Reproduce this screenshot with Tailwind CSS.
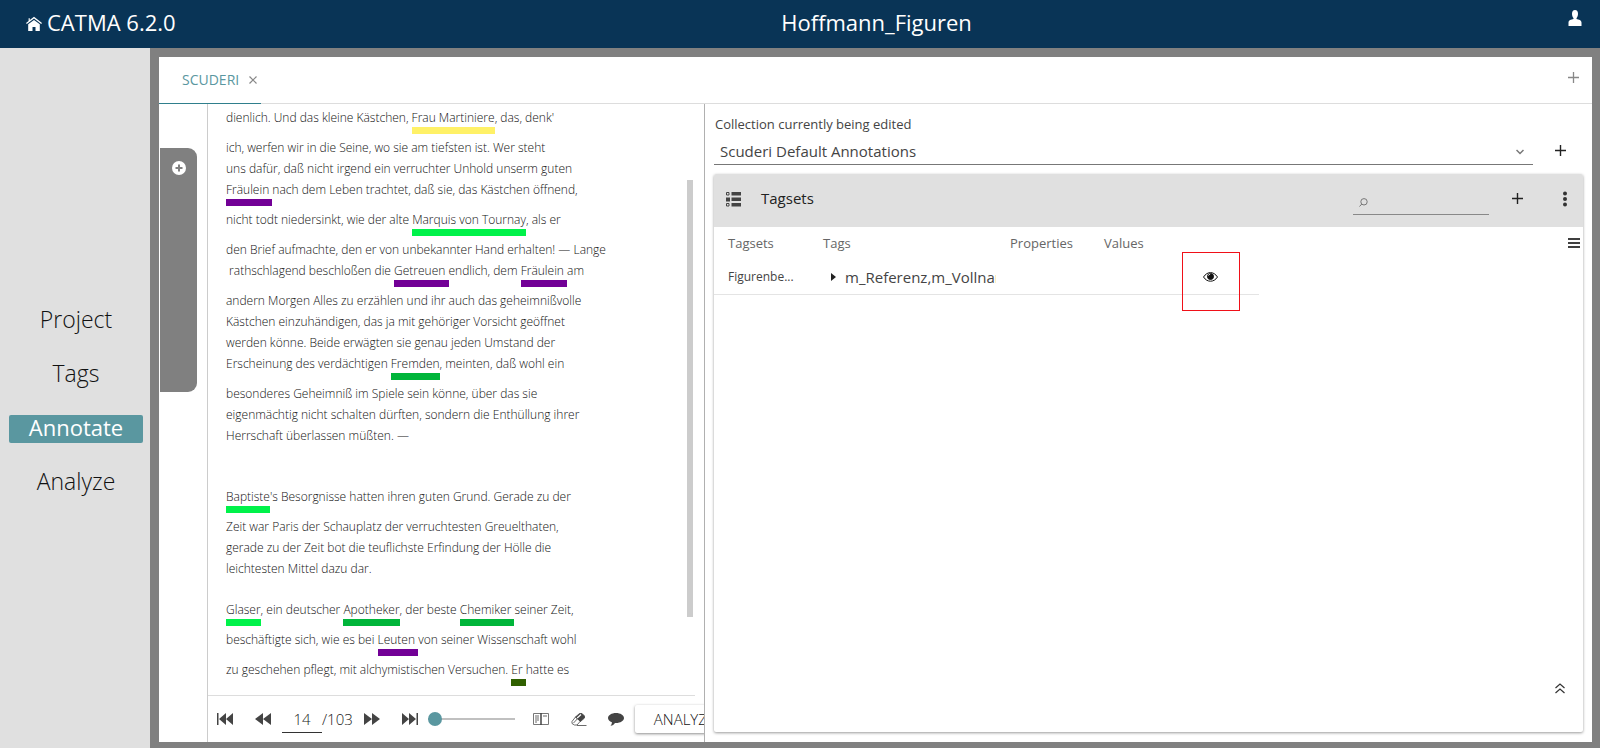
<!DOCTYPE html>
<html lang="en">
<head>
<meta charset="utf-8">
<meta name="viewport" content="width=device-width, initial-scale=1">
<title>CATMA 6.2.0</title>
<script src="https://cdn.jsdelivr.net/npm/@tailwindcss/browser@4"></script>
</head>
<body class="flex h-screen flex-col overflow-hidden bg-[#808080] font-['Open_Sans',sans-serif] text-[#444]">

<header class="flex h-12 shrink-0 items-center bg-[#093456] pb-1 text-[22px] leading-8 text-white">
  <a href="#" class="flex w-[186px] shrink-0 items-center gap-[5px] pl-[26px] whitespace-nowrap">
    <svg class="mt-1 size-4 shrink-0" viewBox="0 0 16 16" fill="currentColor" aria-hidden="true"><path d="M8 .8 3.8 4V2.2H2.6V5L0 7l.8 1L8 2.6 15.200 8l.8-1z"/><path d="M8 4 2.200 8.300V15H6.500v-4h3v4h4.300V8.300z"/></svg>
    <span>CATMA 6.2.0</span>
  </a>
  <h1 class="flex-1 text-center">Hoffmann_Figuren</h1>
  <button type="button" aria-label="Account" class="w-[33px] pb-2">
    <svg class="size-4" viewBox="0 0 16 16" fill="currentColor" aria-hidden="true"><path d="M8 0c2 0 3 1.500 3 3.800 0 1.900-.6 3.500-1.500 4.400v.9c2.400.4 5 1.300 5 3.400V16h-13v-3.500c0-2.100 2.600-3 5-3.400v-.9C5.600 7.300 5 5.700 5 3.800 5 1.500 6 0 8 0z"/></svg>
  </button>
</header>

<div class="flex min-h-0 flex-1">
  <nav class="flex w-[150px] shrink-0 flex-col justify-center gap-[26px] bg-[#e0e0e0] pt-2 pr-[7px] pl-[9px] text-center text-[23px] leading-6 font-light text-[#111]">
    <a href="#" class="pb-1">Project</a>
    <a href="#" class="pb-1">Tags</a>
    <a href="#" aria-current="page" class="rounded-xs bg-[#5a97a0] pb-1 text-[22px] leading-6 font-medium text-white">Annotate</a>
    <a href="#" class="pb-1">Analyze</a>
  </nav>

  <main class="mt-[9px] mr-2 mb-[6px] ml-[9px] flex min-w-0 flex-1 flex-col bg-white">
    <div class="flex h-[47px] shrink-0 justify-between border-b border-[#ddd]">
      <div class="-mb-px flex items-center gap-[10px] border-b border-[#2f7f8c] pr-1 pl-[23px]">
        <a href="#" class="text-sm text-[#5a97a0]">SCUDERI</a>
        <button type="button" aria-label="Close tab" class="text-[#888]"><svg class="size-2" viewBox="0 0 8 8" fill="none" stroke="currentColor" stroke-width="1.200" aria-hidden="true"><path d="M.5.5l7 7M7.500.5l-7 7"/></svg></button>
      </div>
      <button type="button" aria-label="Open tab" class="px-[13px] pb-[6px] text-[#888]"><svg class="size-[11px]" viewBox="0 0 11 11" fill="none" stroke="currentColor" stroke-width="1.300" aria-hidden="true"><path d="M5.500 0v11M0 5.500h11"/></svg></button>
    </div>

    <div class="flex min-h-0 flex-1">
      <section class="flex w-[546px] shrink-0 overflow-hidden border-r border-[#b0b0b0]">
        <div class="w-12 shrink-0 pt-11 pl-px">
          <div class="flex h-[244px] w-[37px] flex-col items-center rounded-r-[9px] bg-[#808080] pt-[13px]">
            <button type="button" aria-label="Expand drawer"><svg class="size-[14px]" viewBox="0 0 14 14" aria-hidden="true"><circle cx="7" cy="7" r="7" fill="#fff"/><path d="M7 3.500v7M3.500 7h7" stroke="#808080" stroke-width="2"/></svg></button>
          </div>
        </div>

        <div class="flex min-w-0 flex-1 flex-col border-l border-[#ccc]">
          <div class="mr-[9px] flex min-h-0 flex-1 justify-between overflow-hidden border-b border-[#ddd]">
            <article lang="de" class="pt-[3px] pl-[18px] text-xs leading-[21px] font-light text-[#111] [&_p]:whitespace-pre">
              <p class="h-[30px]">dienlich. Und das kleine Kästchen, <span class="border-b-7 border-[#fff167] pb-px">Frau Martiniere</span>, das, denk'</p>
              <p>ich, werfen wir in die Seine, wo sie am tiefsten ist. Wer steht</p>
              <p>uns dafür, daß nicht irgend ein verruchter Unhold unserm guten</p>
              <p class="h-[30px]"><span class="border-b-7 border-[#720096] pb-px">Fräulein </span>nach dem Leben trachtet, daß sie, das Kästchen öffnend,</p>
              <p class="h-[30px]">nicht todt niedersinkt, wie der alte <span class="border-b-7 border-[#00f24a] pb-px">Marquis von Tournay</span>, als er</p>
              <p>den Brief aufmachte, den er von unbekannter Hand erhalten! — Lange</p>
              <p class="h-[30px]"> rathschlagend beschloßen die <span class="border-b-7 border-[#720096] pb-px">Getreuen </span>endlich, dem <span class="border-b-7 border-[#720096] pb-px">Fräulein </span>am</p>
              <p>andern Morgen Alles zu erzählen und ihr auch das geheimnißvolle</p>
              <p>Kästchen einzuhändigen, das ja mit gehöriger Vorsicht geöffnet</p>
              <p>werden könne. Beide erwägten sie genau jeden Umstand der</p>
              <p class="h-[30px]">Erscheinung des verdächtigen <span class="border-b-7 border-[#00b53a] pb-px">Fremden</span>, meinten, daß wohl ein</p>
              <p>besonderes Geheimniß im Spiele sein könne, über das sie</p>
              <p>eigenmächtig nicht schalten dürften, sondern die Enthüllung ihrer</p>
              <p class="mb-10">Herrschaft überlassen müßten. —</p>
              <p class="h-[30px]"><span class="border-b-7 border-[#00f24a] pb-px">Baptiste</span>'s Besorgnisse hatten ihren guten Grund. Gerade zu der</p>
              <p>Zeit war Paris der Schauplatz der verruchtesten Greuelthaten,</p>
              <p>gerade zu der Zeit bot die teuflichste Erfindung der Hölle die</p>
              <p class="mb-5">leichtesten Mittel dazu dar.</p>
              <p class="h-[30px]"><span class="border-b-7 border-[#00f24a] pb-px">Glaser</span>, ein deutscher <span class="border-b-7 border-[#00b53a] pb-px">Apotheker</span>, der beste <span class="border-b-7 border-[#00b53a] pb-px">Chemiker </span>seiner Zeit,</p>
              <p class="h-[30px]">beschäftigte sich, wie es bei <span class="border-b-7 border-[#720096] pb-px">Leuten </span>von seiner Wissenschaft wohl</p>
              <p>zu geschehen pflegt, mit alchymistischen Versuchen. <span class="border-b-7 border-[#306000] pb-px">Er </span>hatte es</p>
            </article>
            <div class="mt-[76px] mr-[2px] h-[437px] w-[6px] bg-[#ccc]"></div>
          </div>

          <div class="flex h-[46px] shrink-0 items-center pl-[9px] whitespace-nowrap text-[#444]">
            <button type="button" aria-label="First page"><svg class="h-3 w-4" viewBox="0 0 16 12" fill="currentColor" aria-hidden="true"><path d="M0 0h1.500v12H0zM9 0v12L2 6zM16 0v12L9 6z"/></svg></button>
            <button type="button" aria-label="Previous page" class="ml-[22px]"><svg class="h-3 w-4" viewBox="0 0 16 12" fill="currentColor" aria-hidden="true"><path d="M8 0v12L0 6zM16 0v12L8 6z"/></svg></button>
            <input type="text" value="14" aria-label="Page" class="ml-[11px] h-7 w-10 border-b border-[#333] text-center text-[15px] font-light text-[#222]">
            <span class="text-[15px] font-light text-[#222]">/103</span>
            <button type="button" aria-label="Next page" class="ml-[11px]"><svg class="h-3 w-4" viewBox="0 0 16 12" fill="currentColor" aria-hidden="true"><path d="M0 0v12L8 6zM8 0v12l8-6z"/></svg></button>
            <button type="button" aria-label="Last page" class="ml-[22px]"><svg class="h-3 w-4" viewBox="0 0 16 12" fill="currentColor" aria-hidden="true"><path d="M0 0v12l7-6zM7 0v12l7-6zM14.500 0H16v12h-1.500z"/></svg></button>
            <input type="range" min="0" max="100" value="0" aria-label="Lines per page" class="ml-[10px] h-[14px] w-[87px] appearance-none bg-transparent [&::-webkit-slider-runnable-track]:h-[2px] [&::-webkit-slider-runnable-track]:bg-[#c0c0c0] [&::-webkit-slider-thumb]:-mt-[6px] [&::-webkit-slider-thumb]:size-[14px] [&::-webkit-slider-thumb]:appearance-none [&::-webkit-slider-thumb]:rounded-full [&::-webkit-slider-thumb]:bg-[#5a97a0]">
            <button type="button" aria-label="Synopsis" class="ml-[18px]"><svg class="h-3 w-4" viewBox="0 0 16 12" fill="none" stroke="currentColor" aria-hidden="true"><path d="M.5.5h15v11H.5z" stroke="#777"/><path d="M8 0v12" stroke-width="1.500"/><path d="M2 3h4M2 5h4M2 7h4M2 9h2M10 3h4" stroke-width=".8"/></svg></button>
            <button type="button" aria-label="Clear selection" class="ml-[22px]"><svg class="h-[13px] w-4" viewBox="0 0 16 13" fill="none" stroke="currentColor" stroke-width=".8" aria-hidden="true"><path d="M1 8.500 4.500 4 9.500 8 6 12H3.500L1 10.500z" fill="#fff"/><path d="M4.500 4 8.500.5h2.500L13.500 3v2L9.500 8.500z" fill="currentColor"/><path d="M2.500 10 9 3" /><path d="M6.200 5 10 1.500" stroke="#fff" stroke-width="1.200"/><path d="M6 12.500h9.500"/></svg></button>
            <button type="button" aria-label="Comment" class="ml-[21px]"><svg class="h-[13px] w-4" viewBox="0 0 16 13" fill="currentColor" aria-hidden="true"><path d="M8 0c4.400 0 8 2.200 8 5s-3.600 5-8 5h-1c-1 1.600-2.500 2.500-4.500 2.800.9-.9 1.400-2 1.400-3.500C1.500 8.500 0 6.900 0 5c0-2.800 3.600-5 8-5z"/></svg></button>
            <button type="button" class="ml-[11px] h-7 shrink-0 rounded-xs bg-white px-[19px] text-[15px] font-light text-[#111] shadow-[0_1px_3px_rgba(0,0,0,0.45)]">ANALYZE</button>
          </div>
        </div>
      </section>

      <section class="flex min-w-0 flex-1 flex-col pr-[9px] pb-[10px] pl-[9px]">
        <label for="collection" class="mt-[10px] pl-px text-[13px] leading-5">Collection currently being edited</label>
        <div class="flex h-[31px] shrink-0 items-center">
          <div class="relative h-full flex-1">
            <select id="collection" class="h-full w-full appearance-none border-b border-[#777] bg-transparent pt-1 pl-[6px] text-[15px]"><option>Scuderi Default Annotations</option></select>
            <svg class="pointer-events-none absolute top-[15px] right-[9px] h-[6px] w-2" viewBox="0 0 8 6" fill="none" stroke="#777" stroke-width="1.500" aria-hidden="true"><path d="M.5 1 4 4.500 7.500 1"/></svg>
          </div>
          <button type="button" aria-label="Add collection" class="pt-[2px] pr-[17px] pl-[22px]"><svg class="size-[11px]" viewBox="0 0 11 11" fill="none" stroke="#222" stroke-width="1.400" aria-hidden="true"><path d="M5.500 0v11M0 5.500h11"/></svg></button>
        </div>

        <div class="mt-[9px] flex min-h-0 flex-1 flex-col rounded-xs shadow-[0_1px_3px_rgba(0,0,0,0.4)]">
          <div class="flex h-[53px] shrink-0 items-center rounded-t-xs bg-[#e0e0e0] pr-4 pb-1 pl-3">
            <svg class="h-4 w-[15px]" viewBox="0 0 15 16" aria-hidden="true"><path d="M.5 1.500h2.500v2.500H.5zM.5 12.500h2.500V15H.5z" fill="none" stroke="#444"/><path d="M0 6.500h4v4H0zM5.500 1H15v3.500H5.500zM5.500 6.500H15V10H5.500zM5.500 12H15v3.500H5.500z" fill="#444"/></svg>
            <h2 class="ml-[20px] flex-1 text-[15px] text-[#222]">Tagsets</h2>
            <label class="mr-px flex h-8 w-[136px] items-center border-b border-[#888] pl-[6px]">
              <svg class="mt-2 size-[9px] shrink-0" viewBox="0 0 9 9" fill="none" stroke="#777" aria-hidden="true"><circle cx="5" cy="3.800" r="3.200"/><path d="M2.800 6 .5 8.500"/></svg>
              <input type="search" aria-label="Search tagsets" class="w-full min-w-0 bg-transparent px-1 text-sm outline-none">
            </label>
            <button type="button" aria-label="Add tagset" class="ml-[22px]"><svg class="size-[11px]" viewBox="0 0 11 11" fill="none" stroke="#222" stroke-width="1.400" aria-hidden="true"><path d="M5.500 0v11M0 5.500h11"/></svg></button>
            <button type="button" aria-label="More options" class="ml-10"><svg class="h-4 w-1" viewBox="0 0 4 16" fill="#333" aria-hidden="true"><circle cx="2" cy="2.500" r="2"/><circle cx="2" cy="8" r="2"/><circle cx="2" cy="13.500" r="2"/></svg></button>
          </div>

          <div class="flex min-h-0 flex-1 items-start justify-between pr-[3px]">
            <table class="w-[545px] table-fixed border-collapse text-left">
              <colgroup><col class="w-[95px]"><col class="w-[187px]"><col class="w-[94px]"><col class="w-[93px]"><col class="w-[76px]"></colgroup>
              <thead>
                <tr class="h-[34px] text-[13px] text-[#666]"><th class="pl-[14px] font-normal">Tagsets</th><th class="pl-[14px] font-normal">Tags</th><th class="pl-[14px] font-normal">Properties</th><th class="pl-[14px] font-normal">Values</th><th></th></tr>
              </thead>
              <tbody>
                <tr class="h-[33px] border-b border-[#e4e4e4]">
                  <td class="truncate pl-[14px] text-xs">Figurenbe...</td>
                  <td class="pl-[22px]"><div class="flex items-center gap-[9px] overflow-hidden text-[15px] whitespace-nowrap"><button type="button" aria-label="Expand tagset"><svg class="h-2 w-[5px]" viewBox="0 0 5 8" fill="#222" aria-hidden="true"><path d="M0 0l5 4-5 4z"/></svg></button><span>m_Referenz,m_Vollname</span></div></td>
                  <td></td><td></td>
                  <td class="relative pl-5">
                    <button type="button" aria-label="Toggle visibility" class="block"><svg class="h-[10px] w-[15px]" viewBox="0 0 15 10" fill="none" stroke="#111" aria-hidden="true"><path d="M.5 5C2.500 2 4.800.6 7.500.6S12.500 2 14.500 5C12.500 8 10.200 9.200 7.500 9.200S2.500 8 .5 5z"/><circle cx="7.500" cy="4.500" r="3" fill="#111"/><path d="M5.500 3.500c.3-.8.900-1.300 1.700-1.400" stroke="#fff"/></svg></button>
                    <span class="pointer-events-none absolute -top-[9px] -left-px h-[59px] w-[58px] border border-[#f01018]"></span>
                  </td>
                </tr>
              </tbody>
            </table>
            <button type="button" aria-label="Columns" class="mt-[11px]"><svg class="h-[10px] w-3" viewBox="0 0 12 10" stroke="#000" stroke-width="1.400" aria-hidden="true"><path d="M0 1h12M0 5h12M0 9h12"/></svg></button>
          </div>
          <button type="button" aria-label="Expand panel" class="mr-[18px] mb-[38px] self-end"><svg class="h-[11px] w-[10px]" viewBox="0 0 10 11" fill="none" stroke="#333" stroke-width="1.200" aria-hidden="true"><path d="M.5 5 5 1l4.500 4M.5 10 5 6l4.500 4"/></svg></button>
        </div>
      </section>
    </div>
  </main>
</div>
</body>
</html>
